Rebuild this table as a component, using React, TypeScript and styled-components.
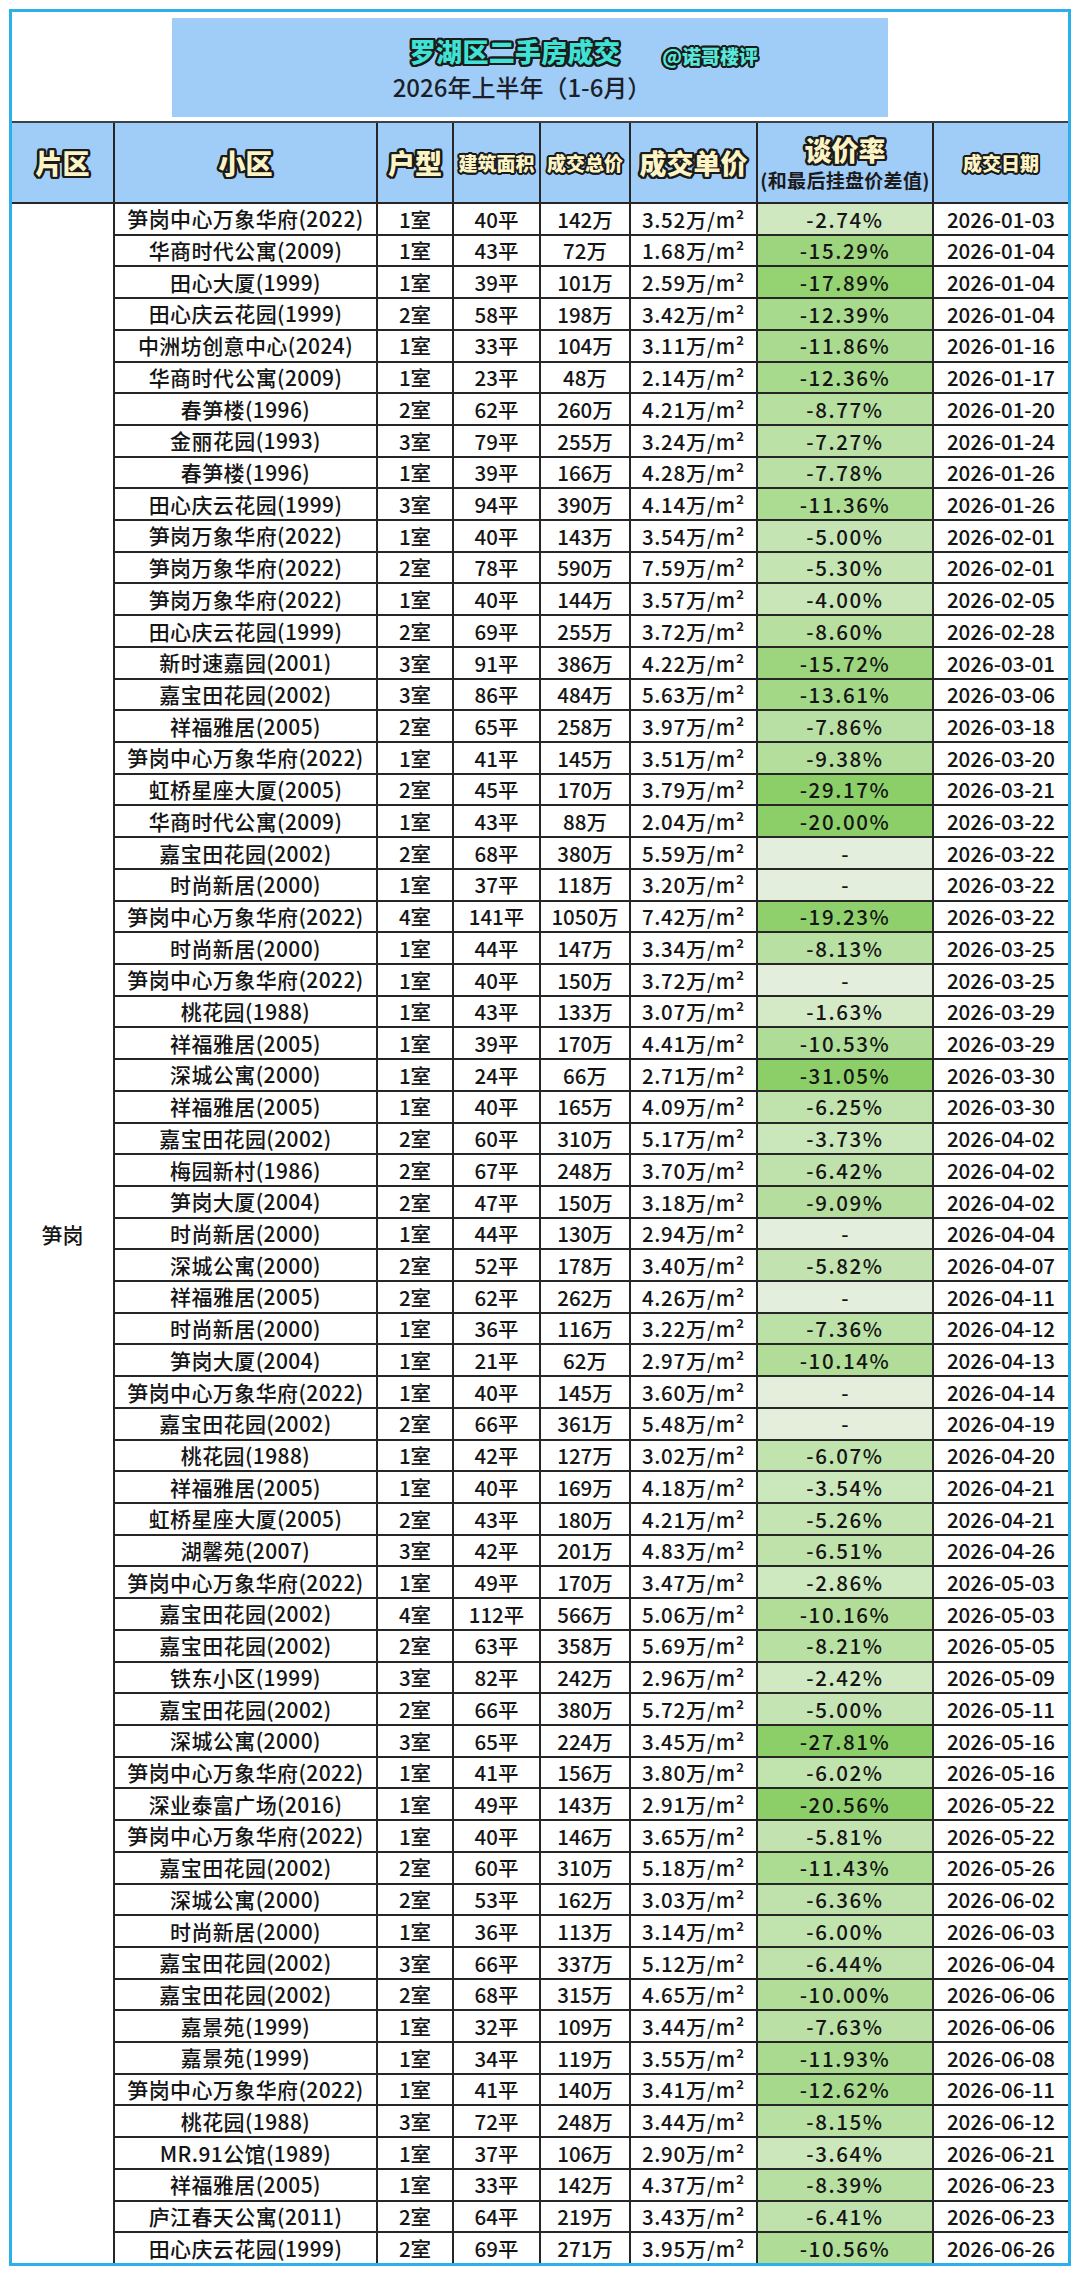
import React from "react";
import styled, { createGlobalStyle } from "styled-components";

const FONT = `"Noto Sans CJK SC", "Noto Sans", "DejaVu Sans", sans-serif`;

const outline = (w: number, c: string) => {
  const parts: string[] = [];
  for (let i = 0; i < 16; i++) {
    const a = (i * Math.PI) / 8;
    parts.push(`${(Math.cos(a) * w).toFixed(2)}px ${(Math.sin(a) * w).toFixed(2)}px 0 ${c}`);
  }
  return parts.join(", ");
};

const OUTLINE_BIG = outline(2.4, "#1b1b1b");
const OUTLINE_SMALL = outline(2, "#1b1b1b");

const GlobalStyle = createGlobalStyle`
  html, body { margin: 0; padding: 0; background: #ffffff; }
  body { font-family: ${FONT}; color: #151515; }
  * { box-sizing: border-box; }
`;

const Page = styled.div`
  width: 1080px;
  height: 2275px;
  padding: 9px;
  background: #ffffff;
`;

const Frame = styled.div`
  width: 1062px;
  height: 2257px;
  border: 3px solid #2cb0ea;
  display: flex;
  flex-direction: column;
  overflow: hidden;
  background: #ffffff;
`;

const TopArea = styled.div`
  flex: none;
  height: 109px;
  padding: 6px 0 0 160px;
`;

const TitleBox = styled.div`
  width: 716px;
  height: 99px;
  background: #a0ccf8;
  display: flex;
  flex-direction: column;
  align-items: center;
  padding-top: 17px;
  gap: 5px;
`;

const TitleLine = styled.div`
  position: relative;
  margin-right: 30px;
  line-height: 32px;
  height: 32px;
`;

const TitleMain = styled.span`
  font-family: ${FONT};
  font-size: 26px;
  font-weight: 900;
  color: #3fe2d4;
  text-shadow: ${OUTLINE_BIG};
  letter-spacing: 0.3px;
`;

const Handle = styled.span`
  position: absolute;
  left: calc(100% + 42px);
  top: 9px;
  white-space: nowrap;
  font-size: 19px;
  line-height: 24px;
  font-weight: 900;
  color: #5ae6da;
  text-shadow: ${OUTLINE_SMALL};
`;

const Subtitle = styled.div`
  margin-right: 16px;
  font-size: 24px;
  line-height: 30px;
  font-weight: 500;
  color: #1c1f2a;
`;

const Table = styled.div`
  flex: 1;
  display: grid;
  grid-template-columns: 101px 261px 74px 85px 88px 125px 174px 1fr;
  grid-template-rows: 79px;
  grid-auto-rows: 1fr;
  gap: 2px;
  background: #262626;
  border-top: 2px solid #3b404a;
`;

const HeadCell = styled.div<{ $size: number }>`
  background: #a0ccf8;
  display: flex;
  flex-direction: column;
  align-items: center;
  justify-content: center;
  font-size: ${(p) => p.$size}px;
  line-height: 1.15;
  font-weight: 900;
  color: #fdf4c6;
  text-shadow: ${(p) => (p.$size > 22 ? OUTLINE_BIG : OUTLINE_SMALL)};
  white-space: nowrap;
`;

const HeadNote = styled.span`
  margin-top: 4px;
  font-size: 19px;
  font-weight: 700;
  color: #1b1b1b;
  text-shadow: none;
  letter-spacing: 0.3px;
`;

const DistrictCell = styled.div`
  grid-column: 1;
  grid-row: 2 / span 65;
  background: #ffffff;
  display: flex;
  align-items: center;
  justify-content: center;
  font-size: 21px;
  font-weight: 500;
  color: #151515;
`;

const Cell = styled.div<{ $bg?: string; $spacing?: number; $size?: number }>`
  background: ${(p) => p.$bg || "#ffffff"};
  display: flex;
  align-items: center;
  justify-content: center;
  font-size: ${(p) => p.$size || 20.5}px;
  font-weight: 500;
  letter-spacing: ${(p) => p.$spacing || 0}px;
  color: #151515;
  white-space: nowrap;
  line-height: 1;
`;

const RAW = `笋岗中心万象华府|2022|1室|40平|142万|3.52|-2.74%|2026-01-03
华商时代公寓|2009|1室|43平|72万|1.68|-15.29%|2026-01-04
田心大厦|1999|1室|39平|101万|2.59|-17.89%|2026-01-04
田心庆云花园|1999|2室|58平|198万|3.42|-12.39%|2026-01-04
中洲坊创意中心|2024|1室|33平|104万|3.11|-11.86%|2026-01-16
华商时代公寓|2009|1室|23平|48万|2.14|-12.36%|2026-01-17
春笋楼|1996|2室|62平|260万|4.21|-8.77%|2026-01-20
金丽花园|1993|3室|79平|255万|3.24|-7.27%|2026-01-24
春笋楼|1996|1室|39平|166万|4.28|-7.78%|2026-01-26
田心庆云花园|1999|3室|94平|390万|4.14|-11.36%|2026-01-26
笋岗万象华府|2022|1室|40平|143万|3.54|-5.00%|2026-02-01
笋岗万象华府|2022|2室|78平|590万|7.59|-5.30%|2026-02-01
笋岗万象华府|2022|1室|40平|144万|3.57|-4.00%|2026-02-05
田心庆云花园|1999|2室|69平|255万|3.72|-8.60%|2026-02-28
新时速嘉园|2001|3室|91平|386万|4.22|-15.72%|2026-03-01
嘉宝田花园|2002|3室|86平|484万|5.63|-13.61%|2026-03-06
祥福雅居|2005|2室|65平|258万|3.97|-7.86%|2026-03-18
笋岗中心万象华府|2022|1室|41平|145万|3.51|-9.38%|2026-03-20
虹桥星座大厦|2005|2室|45平|170万|3.79|-29.17%|2026-03-21
华商时代公寓|2009|1室|43平|88万|2.04|-20.00%|2026-03-22
嘉宝田花园|2002|2室|68平|380万|5.59|-|2026-03-22
时尚新居|2000|1室|37平|118万|3.20|-|2026-03-22
笋岗中心万象华府|2022|4室|141平|1050万|7.42|-19.23%|2026-03-22
时尚新居|2000|1室|44平|147万|3.34|-8.13%|2026-03-25
笋岗中心万象华府|2022|1室|40平|150万|3.72|-|2026-03-25
桃花园|1988|1室|43平|133万|3.07|-1.63%|2026-03-29
祥福雅居|2005|1室|39平|170万|4.41|-10.53%|2026-03-29
深城公寓|2000|1室|24平|66万|2.71|-31.05%|2026-03-30
祥福雅居|2005|1室|40平|165万|4.09|-6.25%|2026-03-30
嘉宝田花园|2002|2室|60平|310万|5.17|-3.73%|2026-04-02
梅园新村|1986|2室|67平|248万|3.70|-6.42%|2026-04-02
笋岗大厦|2004|2室|47平|150万|3.18|-9.09%|2026-04-02
时尚新居|2000|1室|44平|130万|2.94|-|2026-04-04
深城公寓|2000|2室|52平|178万|3.40|-5.82%|2026-04-07
祥福雅居|2005|2室|62平|262万|4.26|-|2026-04-11
时尚新居|2000|1室|36平|116万|3.22|-7.36%|2026-04-12
笋岗大厦|2004|1室|21平|62万|2.97|-10.14%|2026-04-13
笋岗中心万象华府|2022|1室|40平|145万|3.60|-|2026-04-14
嘉宝田花园|2002|2室|66平|361万|5.48|-|2026-04-19
桃花园|1988|1室|42平|127万|3.02|-6.07%|2026-04-20
祥福雅居|2005|1室|40平|169万|4.18|-3.54%|2026-04-21
虹桥星座大厦|2005|2室|43平|180万|4.21|-5.26%|2026-04-21
湖馨苑|2007|3室|42平|201万|4.83|-6.51%|2026-04-26
笋岗中心万象华府|2022|1室|49平|170万|3.47|-2.86%|2026-05-03
嘉宝田花园|2002|4室|112平|566万|5.06|-10.16%|2026-05-03
嘉宝田花园|2002|2室|63平|358万|5.69|-8.21%|2026-05-05
铁东小区|1999|3室|82平|242万|2.96|-2.42%|2026-05-09
嘉宝田花园|2002|2室|66平|380万|5.72|-5.00%|2026-05-11
深城公寓|2000|3室|65平|224万|3.45|-27.81%|2026-05-16
笋岗中心万象华府|2022|1室|41平|156万|3.80|-6.02%|2026-05-16
深业泰富广场|2016|1室|49平|143万|2.91|-20.56%|2026-05-22
笋岗中心万象华府|2022|1室|40平|146万|3.65|-5.81%|2026-05-22
嘉宝田花园|2002|2室|60平|310万|5.18|-11.43%|2026-05-26
深城公寓|2000|2室|53平|162万|3.03|-6.36%|2026-06-02
时尚新居|2000|1室|36平|113万|3.14|-6.00%|2026-06-03
嘉宝田花园|2002|3室|66平|337万|5.12|-6.44%|2026-06-04
嘉宝田花园|2002|2室|68平|315万|4.65|-10.00%|2026-06-06
嘉景苑|1999|1室|32平|109万|3.44|-7.63%|2026-06-06
嘉景苑|1999|1室|34平|119万|3.55|-11.93%|2026-06-08
笋岗中心万象华府|2022|1室|41平|140万|3.41|-12.62%|2026-06-11
桃花园|1988|3室|72平|248万|3.44|-8.15%|2026-06-12
MR.91公馆|1989|1室|37平|106万|2.90|-3.64%|2026-06-21
祥福雅居|2005|1室|33平|142万|4.37|-8.39%|2026-06-23
庐江春天公寓|2011|2室|64平|219万|3.43|-6.41%|2026-06-23
田心庆云花园|1999|2室|69平|271万|3.95|-10.56%|2026-06-26`;

type Row = {
  name: string;
  year: string;
  rooms: string;
  area: string;
  total: string;
  unit: string;
  rate: string;
  date: string;
};

const ROWS: Row[] = RAW.split("\n").map((line) => {
  const [name, year, rooms, area, total, unit, rate, date] = line.split("|");
  return { name, year, rooms, area, total, unit, rate, date };
});

const rateColor = (rate: string) => {
  if (rate === "-") return "#e3eedc";
  const v = Math.abs(parseFloat(rate));
  const t = Math.pow(Math.min(v / 20, 1), 0.9);
  const light = [220, 237, 210];
  const dark = [140, 207, 104];
  const c = light.map((l, i) => Math.round(l + (dark[i] - l) * t));
  return `rgb(${c[0]}, ${c[1]}, ${c[2]})`;
};

export default function App() {
  return (
    <Page>
      <GlobalStyle />
      <Frame>
        <TopArea>
          <TitleBox>
            <TitleLine>
              <TitleMain>罗湖区二手房成交</TitleMain>
              <Handle>@诺哥楼评</Handle>
            </TitleLine>
            <Subtitle>2026年上半年（1-6月）</Subtitle>
          </TitleBox>
        </TopArea>
        <Table>
          <HeadCell $size={27}>片区</HeadCell>
          <HeadCell $size={27}>小区</HeadCell>
          <HeadCell $size={27}>户型</HeadCell>
          <HeadCell $size={19}>建筑面积</HeadCell>
          <HeadCell $size={19}>成交总价</HeadCell>
          <HeadCell $size={27}>成交单价</HeadCell>
          <HeadCell $size={27}>
            谈价率
            <HeadNote>(和最后挂盘价差值)</HeadNote>
          </HeadCell>
          <HeadCell $size={19}>成交日期</HeadCell>
          <DistrictCell>笋岗</DistrictCell>
          {ROWS.map((r, i) => (
            <React.Fragment key={i}>
              <Cell $size={21} $spacing={0.4}>
                {r.name}({r.year})
              </Cell>
              <Cell>{r.rooms}</Cell>
              <Cell>{r.area}</Cell>
              <Cell>{r.total}</Cell>
              <Cell $spacing={0.7}>{r.unit}万/m²</Cell>
              <Cell $bg={rateColor(r.rate)} $spacing={r.rate === "-" ? 0 : 1.6}>
                {r.rate}
              </Cell>
              <Cell>{r.date}</Cell>
            </React.Fragment>
          ))}
        </Table>
      </Frame>
    </Page>
  );
}
